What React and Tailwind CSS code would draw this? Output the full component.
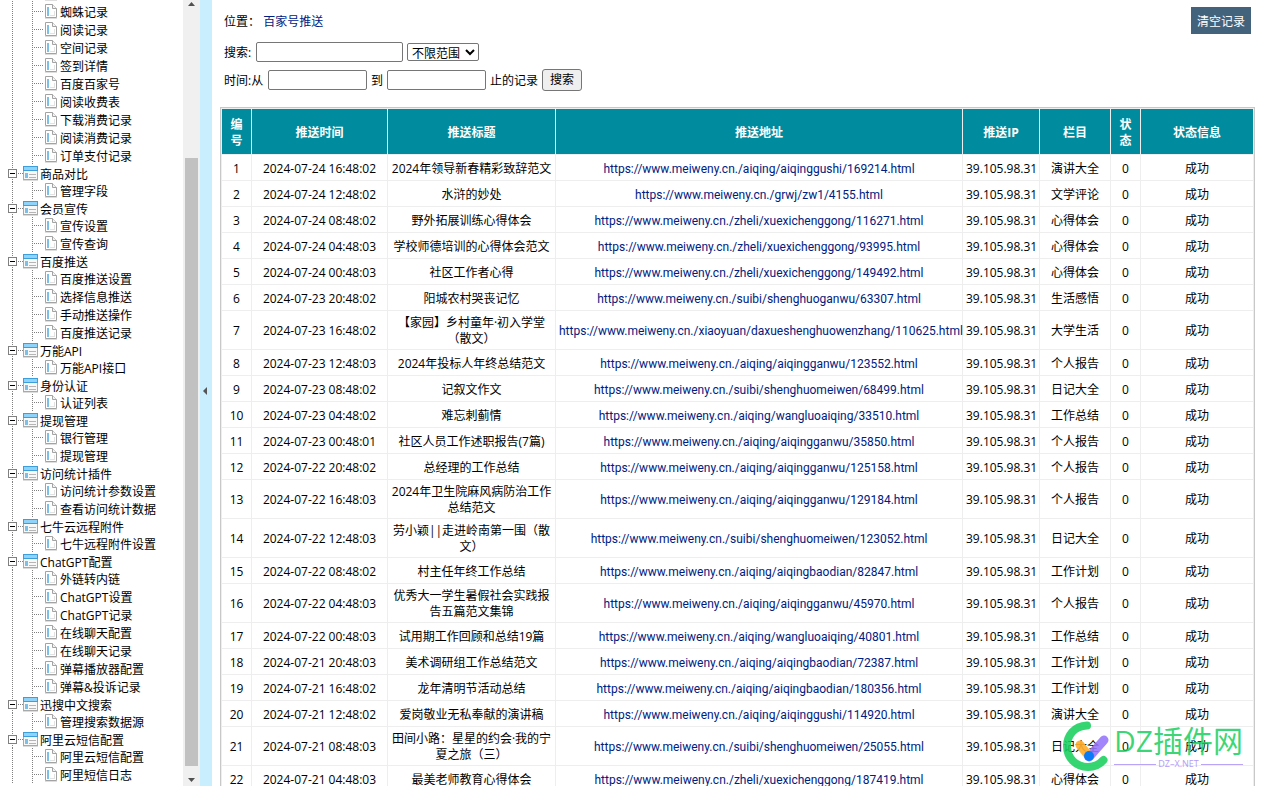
import React from "react";

const GROUPS = [
  { name: null, items: ["", "蜘蛛记录", "阅读记录", "空间记录", "签到详情", "百度百家号", "阅读收费表", "下载消费记录", "阅读消费记录", "订单支付记录"] },
  { name: "商品对比", items: ["管理字段"] },
  { name: "会员宣传", items: ["宣传设置", "宣传查询"] },
  { name: "百度推送", items: ["百度推送设置", "选择信息推送", "手动推送操作", "百度推送记录"] },
  { name: "万能API", items: ["万能API接口"] },
  { name: "身份认证", items: ["认证列表"] },
  { name: "提现管理", items: ["银行管理", "提现管理"] },
  { name: "访问统计插件", items: ["访问统计参数设置", "查看访问统计数据"] },
  { name: "七牛云远程附件", items: ["七牛远程附件设置"] },
  { name: "ChatGPT配置", items: ["外链转内链", "ChatGPT设置", "ChatGPT记录", "在线聊天配置", "在线聊天记录", "弹幕播放器配置", "弹幕&投诉记录"] },
  { name: "迅搜中文搜索", items: ["管理搜索数据源"] },
  { name: "阿里云短信配置", items: ["阿里云短信配置", "阿里短信日志"] },
];

const ROWS = [
  ["2024-07-24 16:48:02", "2024年领导新春精彩致辞范文", "aiqing/aiqinggushi/169214", "演讲大全"],
  ["2024-07-24 12:48:02", "水浒的妙处", "grwj/zw1/4155", "文学评论"],
  ["2024-07-24 08:48:02", "野外拓展训练心得体会", "zheli/xuexichenggong/116271", "心得体会"],
  ["2024-07-24 04:48:03", "学校师德培训的心得体会范文", "zheli/xuexichenggong/93995", "心得体会"],
  ["2024-07-24 00:48:03", "社区工作者心得", "zheli/xuexichenggong/149492", "心得体会"],
  ["2024-07-23 20:48:02", "阳城农村哭丧记忆", "suibi/shenghuoganwu/63307", "生活感悟"],
  ["2024-07-23 16:48:02", "【家园】乡村童年·初入学堂（散文）", "xiaoyuan/daxueshenghuowenzhang/110625", "大学生活"],
  ["2024-07-23 12:48:03", "2024年投标人年终总结范文", "aiqing/aiqingganwu/123552", "个人报告"],
  ["2024-07-23 08:48:02", "记叙文作文", "suibi/shenghuomeiwen/68499", "日记大全"],
  ["2024-07-23 04:48:02", "难忘刺蓟情", "aiqing/wangluoaiqing/33510", "工作总结"],
  ["2024-07-23 00:48:01", "社区人员工作述职报告(7篇)", "aiqing/aiqingganwu/35850", "个人报告"],
  ["2024-07-22 20:48:02", "总经理的工作总结", "aiqing/aiqingganwu/125158", "个人报告"],
  ["2024-07-22 16:48:03", "2024年卫生院麻风病防治工作总结范文", "aiqing/aiqingganwu/129184", "个人报告"],
  ["2024-07-22 12:48:03", "劳小颖||走进岭南第一围（散文）", "suibi/shenghuomeiwen/123052", "日记大全"],
  ["2024-07-22 08:48:02", "村主任年终工作总结", "aiqing/aiqingbaodian/82847", "工作计划"],
  ["2024-07-22 04:48:03", "优秀大一学生暑假社会实践报告五篇范文集锦", "aiqing/aiqingganwu/45970", "个人报告"],
  ["2024-07-22 00:48:03", "试用期工作回顾和总结19篇", "aiqing/wangluoaiqing/40801", "工作总结"],
  ["2024-07-21 20:48:03", "美术调研组工作总结范文", "aiqing/aiqingbaodian/72387", "工作计划"],
  ["2024-07-21 16:48:02", "龙年清明节活动总结", "aiqing/aiqingbaodian/180356", "工作计划"],
  ["2024-07-21 12:48:02", "爱岗敬业无私奉献的演讲稿", "aiqing/aiqinggushi/114920", "演讲大全"],
  ["2024-07-21 08:48:03", "田间小路：星星的约会·我的宁夏之旅（三）", "suibi/shenghuomeiwen/25055", "日记大全"],
  ["2024-07-21 04:48:03", "最美老师教育心得体会", "zheli/xuexichenggong/187419", "心得体会"],
];

function ItemLines() {
  return (
    <svg width="45" height="18" className="shrink-0" shapeRendering="crispEdges" stroke="#808080" strokeDasharray="1 1" aria-hidden="true">
      <path d="M12.5 0V18M32.5 0V18M34 8.5H44" />
    </svg>
  );
}

function PageIcon() {
  return (
    <svg width="12" height="16" viewBox="0 0 12 16" className="shrink-0" aria-hidden="true">
      <path d="M.5 .5H7.5L11.500 4.500V13.500H.5Z" fill="#fff" stroke="#a3a3a3" />
      <path d="M7.500 .5V4.500H11.500" fill="#f4f4f4" stroke="#a3a3a3" />
      <path d="M2 3H4V12H2Z" fill="#7cc0e8" />
      <path d="M5 11H10V12H5ZM9 7H10V12H9Z" fill="#e2e2e2" />
      <path d="M0 14H12V15H0Z" fill="#dedede" />
    </svg>
  );
}

function ToggleIcon() {
  return (
    <svg width="23" height="17" shapeRendering="crispEdges" aria-hidden="true">
      <path d="M12.500 0V17M18 8.500H23" stroke="#808080" strokeDasharray="1 1" />
      <rect x="8.500" y="4.500" width="8" height="8" fill="#fff" stroke="#808080" />
      <path d="M10 8.500H15" stroke="#000" />
    </svg>
  );
}

function FolderIcon() {
  return (
    <svg width="15" height="15" viewBox="0 0 15 15" className="shrink-0" shapeRendering="crispEdges" aria-hidden="true">
      <rect x=".5" y=".5" width="14" height="13" fill="#f8f8f8" stroke="#a9a9a9" />
      <rect width="15" height="5" fill="#3c9edb" />
      <rect x="1" y="1" width="13" height="3" fill="#8fd3fa" />
      <path d="M2 7H5V12H2Z" fill="#7cc0e8" />
      <path d="M6 8H13V9H6ZM6 11H13V12H6Z" fill="#b5b5b5" />
      <path d="M0 14H15V15H0Z" fill="#dcdcdc" />
    </svg>
  );
}

function Sidebar() {
  return (
    <aside className="flex h-full w-50 shrink-0">
      <nav className="flex min-w-0 grow flex-col justify-end overflow-hidden pb-0.5 whitespace-nowrap">
        {GROUPS.map((g, i) => (
          <div key={i}>
            {g.name && (
              <div className="flex h-[17px] items-center">
                <button type="button" aria-label={g.name} className="shrink-0"><ToggleIcon /></button>
                <FolderIcon />
                <a href="#" className="ml-0.5 pt-0.5">{g.name}</a>
              </div>
            )}
            <ul>
              {g.items.map((t, j) => (
                <li key={j} className="flex h-[18px] items-center">
                  <ItemLines />
                  <PageIcon />
                  {t && <a href="#" className="ml-[3px] pt-0.5">{t}</a>}
                </li>
              ))}
            </ul>
          </div>
        ))}
      </nav>
      <div className="flex w-[17px] shrink-0 flex-col items-center justify-between bg-[#f0f0f0] pt-0.5 pb-1">
        <svg width="7" height="4" aria-hidden="true"><path d="M0 4L3.500 0L7 4Z" fill="#505050" /></svg>
        <div className="flex w-full grow flex-col items-center justify-end pb-3">
          <div className="h-[80%] w-[13px] bg-[#c1c1c1]" />
        </div>
        <svg width="7" height="4" aria-hidden="true"><path d="M0 0H7L3.500 4Z" fill="#505050" /></svg>
      </div>
    </aside>
  );
}

function Watermark() {
  return (
    <div className="pointer-events-none absolute right-[19px] bottom-[14px] flex items-center gap-1">
      <svg width="48" height="52" viewBox="0 0 48 52" fill="none" strokeLinecap="round" strokeWidth="8" aria-hidden="true">
        <path d="M25 5.500C12 6 5 16 5 26C5 38 14 47 26 47C33 47 38 44 41.500 40" stroke="#19cf5f" strokeOpacity=".88" />
        <path d="M42 20L27 37" stroke="#9573fb" strokeOpacity=".88" strokeWidth="9" />
        <path d="M18 25L26 35" stroke="#ffae2c" strokeOpacity=".92" strokeWidth="9" />
        <circle cx="27" cy="36" r="5" fill="#0a7bf7" />
      </svg>
      <div className="flex flex-col">
        <span className="text-[30px] leading-9 whitespace-nowrap text-[#19cf5f]/85">DZ插件网</span>
        <span className="flex items-center gap-0.5 text-[9px] leading-[10px] text-[#b39cf5]">
          <span className="h-px grow bg-[#b9a4f7]" />DZ–X.NET<span className="h-px grow bg-[#b9a4f7]" />
        </span>
      </div>
    </div>
  );
}

const TH = "h-[47px] border-t border-r border-b border-[#eee] px-1.5 pt-[7px] pb-[5px] first:border-l";
const TD = "h-[26px] border-r border-b border-[#eee] px-[3px] pt-1 pb-0.5 first:border-l";
const FIELD = "h-5 rounded-xs border border-[#767676] bg-white px-1 outline-none";

export default function App() {
  return (
    <div className="relative flex h-screen overflow-hidden bg-white font-['Open_Sans','Noto_Sans_CJK_SC',sans-serif] text-xs leading-4 text-black">
      <Sidebar />
      <button type="button" aria-label="收起菜单" className="flex w-3 shrink-0 items-center justify-center bg-[#c9efff] pr-0.5 pb-1">
        <svg width="4" height="8" aria-hidden="true"><path d="M4 0V8L0 4Z" fill="#555" /></svg>
      </button>
      <main className="min-w-0 grow overflow-hidden pr-[7px] pl-2">
        <header className="flex items-center justify-between pt-[7px] pr-1 pl-1">
          <p className="pt-0.5">位置： <a href="#" className="text-[#00207f]">百家号推送</a></p>
          <button type="button" className="h-[27px] bg-[#42637b] px-1.5 pt-0.5 text-white">清空记录</button>
        </header>
        <form className="mt-2 flex flex-col gap-[7px] pl-1" onSubmit={(e) => e.preventDefault()}>
          <div className="flex h-5 items-center gap-1">
            <label htmlFor="kw" className="w-7 pt-0.5">搜索:</label>
            <input id="kw" className={`${FIELD} w-[147px]`} />
            <select aria-label="范围" className="h-[18px] w-[72px] rounded-xs border border-[#767676] bg-white">
              <option>不限范围</option>
            </select>
          </div>
          <div className="flex h-[22px] items-center gap-1">
            <label htmlFor="from" className="w-10 pt-0.5">时间:从</label>
            <input id="from" className={`${FIELD} w-[99px]`} />
            <label htmlFor="to" className="pt-0.5">到</label>
            <input id="to" className={`${FIELD} w-[99px]`} />
            <span className="pt-0.5">止的记录</span>
            <button type="submit" className="h-[22px] w-10 rounded-[3px] border border-[#767676] bg-[#efefef]">搜索</button>
          </div>
        </form>
        <div className="mt-4 border border-[#c8c8c8]">
          <table className="w-full table-fixed border-separate border-spacing-0 text-center">
            <colgroup>
              <col className="w-[31px]" />
              <col className="w-[136px]" />
              <col className="w-[168px]" />
              <col />
              <col className="w-[77px]" />
              <col className="w-[71px]" />
              <col className="w-[30px]" />
              <col className="w-[113px]" />
            </colgroup>
            <thead className="bg-[#008c9e] text-white">
              <tr>
                {["编号", "推送时间", "推送标题", "推送地址", "推送IP", "栏目", "状态", "状态信息"].map((h) => (
                  <th key={h} className={TH}>{h}</th>
                ))}
              </tr>
            </thead>
            <tbody>
              {ROWS.map(([time, title, url, cat], i) => (
                <tr key={i}>
                  <td className={TD}>{i + 1}</td>
                  <td className={TD}>{time}</td>
                  <td className={TD}>{title}</td>
                  <td className={`${TD} font-[Roboto,sans-serif] whitespace-nowrap`}>
                    <a href="#" className="text-[#00207f]">{`https://www.meiweny.cn./${url}.html`}</a>
                  </td>
                  <td className={`${TD} whitespace-nowrap`}>39.105.98.31</td>
                  <td className={TD}>{cat}</td>
                  <td className={TD}>0</td>
                  <td className={TD}>成功</td>
                </tr>
              ))}
            </tbody>
          </table>
        </div>
      </main>
      <Watermark />
    </div>
  );
}
